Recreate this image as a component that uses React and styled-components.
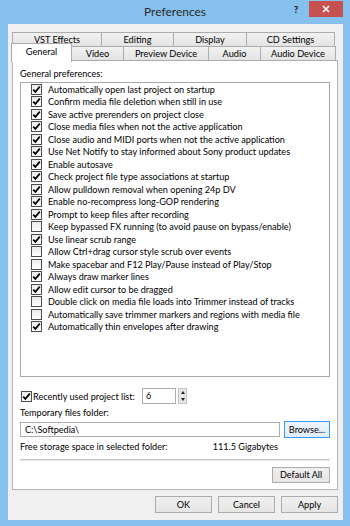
import React from 'react';
import styled, { createGlobalStyle } from 'styled-components';

const GlobalStyle = createGlobalStyle`
  html, body {
    margin: 0;
    padding: 0;
    width: 350px;
    height: 526px;
    overflow: hidden;
  }
  body {
    font-family: Lato, "Liberation Sans", Arial, sans-serif;
    font-size: 9.1px;
    color: #000;
  }
`;

const Window = styled.div`
  width: 350px;
  height: 526px;
  background: #86c0ec;
  display: flex;
  flex-direction: column;
  box-sizing: border-box;
`;

const TitleBar = styled.div`
  height: 24px;
  flex: 0 0 24px;
  display: grid;
  grid-template-columns: 1fr auto 1fr;
  align-items: start;
`;

const Title = styled.div`
  grid-column: 2;
  font-size: 12px;
  line-height: 24px;
  color: #2a2a2a;
`;

const Controls = styled.div`
  grid-column: 3;
  justify-self: end;
  display: flex;
  align-items: flex-start;
  margin-right: 7px;
`;

const HelpButton = styled.div`
  width: 14px;
  height: 16px;
  margin-top: 1px;
  margin-right: 6px;
  font-size: 10px;
  font-weight: 700;
  line-height: 16px;
  text-align: center;
  color: #111;
`;

const CloseButton = styled.div`
  width: 34px;
  height: 16px;
  margin-top: 1px;
  background: #c75050;
  display: flex;
  align-items: center;
  justify-content: center;
`;

const Client = styled.div`
  flex: 1;
  margin: 0 7px 6px 8px;
  padding: 8px 5px 6px 4px;
  background: #f0f0f0;
  display: flex;
  flex-direction: column;
`;

const TabRow = styled.div`
  display: flex;
  align-items: flex-start;
  height: 15px;
  & + & {
    margin-top: -1px;
  }
`;

const Tab = styled.div`
  position: relative;
  box-sizing: border-box;
  width: ${p => p.$w}px;
  height: ${p => (p.$active ? 19 : 15)}px;
  margin-left: ${p => (p.$first ? (p.$active ? -1 : 0) : -1)}px;
  margin-top: ${p => (p.$active ? -3 : 0)}px;
  border: 1px solid #acacac;
  border-bottom: ${p => (p.$active ? 'none' : '1px solid #acacac')};
  background: ${p => (p.$active ? '#fff' : 'linear-gradient(#f2f2f2, #e3e3e3)')};
  z-index: ${p => (p.$active ? 2 : 1)};
  text-align: center;
  font-size: 9.2px;
  line-height: ${p => (p.$active ? 16 : 13)}px;
  white-space: nowrap;
`;

const Panel = styled.div`
  margin-top: -1px;
  border: 1px solid #b4b4b4;
  background: #fff;
  padding: 7px 7px 6px 7px;
  display: flex;
  flex-direction: column;
`;

const Label = styled.div`
  height: 12px;
  line-height: 12px;
  white-space: nowrap;
  margin-top: ${p => p.$gap || 0}px;
`;

const ListBox = styled.div`
  box-sizing: border-box;
  height: 295px;
  margin-top: 2px;
  border: 1px solid #a9a9a9;
  padding: 0 0 0 10px;
`;

const OptionRow = styled.div`
  height: 12.5px;
  display: flex;
  align-items: center;
  gap: 6px;
  white-space: nowrap;
`;

const Box = styled.span`
  box-sizing: border-box;
  flex: 0 0 11px;
  width: 11px;
  height: 11px;
  border: 1px solid #4d4d4d;
  background: linear-gradient(#eaeaea, #ffffff);
  display: flex;
  align-items: center;
  justify-content: center;
  margin-left: ${p => p.$indent || 0}px;
`;

const CheckBox = ({ checked, indent }) => (
  <Box $indent={indent}>
    {checked && (
      <svg width="9" height="9" viewBox="0 0 9 9">
        <path d="M1.2 4.6 L3.4 6.9 L7.8 1.6" fill="none" stroke="#000" strokeWidth="1.7" />
      </svg>
    )}
  </Box>
);

const RecentRow = styled.div`
  display: flex;
  align-items: center;
  height: 16px;
  margin-top: 11px;
  white-space: nowrap;
`;

const RecentLabel = styled.span`
  width: 109px;
  margin-left: 1px;
`;

const SpinField = styled.div`
  box-sizing: border-box;
  width: 34px;
  height: 16px;
  border: 1px solid #abadb3;
  padding-left: 3px;
  line-height: 14px;
`;

const Spinner = styled.div`
  box-sizing: border-box;
  width: 9px;
  height: 16px;
  margin-left: 2px;
  border: 1px solid #c4c4c4;
  background: #e6e6e6;
  display: flex;
  flex-direction: column;
  align-items: center;
  justify-content: space-around;
`;

const Arrow = styled.span`
  width: 0;
  height: 0;
  border-left: 2px solid transparent;
  border-right: 2px solid transparent;
  ${p => (p.$down ? 'border-top: 3px solid #222;' : 'border-bottom: 3px solid #222;')}
`;

const FolderRow = styled.div`
  display: grid;
  grid-template-columns: 1fr 46px;
  gap: 4px;
  align-items: center;
  margin-top: 2px;
  height: 17px;
`;

const TextField = styled.div`
  box-sizing: border-box;
  height: 15px;
  border: 1px solid #abadb3;
  padding-left: 4px;
  line-height: 13px;
`;

const Button = styled.div`
  box-sizing: border-box;
  width: ${p => p.$w || 57}px;
  height: ${p => p.$h || 17}px;
  border: 1px solid ${p => (p.$focus ? '#3399ff' : '#acacac')};
  background: ${p => (p.$focus ? 'linear-gradient(#eef5fc, #e1eefb)' : 'linear-gradient(#f0f0f0, #e5e5e5)')};
  text-align: center;
  line-height: ${p => (p.$h || 17) - 2}px;
  white-space: nowrap;
`;

const StorageRow = styled.div`
  display: flex;
  justify-content: space-between;
  height: 12px;
  line-height: 12px;
  margin-top: 3px;
  padding-right: 52px;
  white-space: nowrap;
`;

const Separator = styled.div`
  margin-top: 6px;
  height: 0;
  border-top: 1px solid #c8c8c8;
  border-bottom: 1px solid #e8e8e8;
`;

const PanelActions = styled.div`
  display: flex;
  justify-content: flex-end;
  margin-top: 6px;
`;

const Footer = styled.div`
  display: flex;
  justify-content: flex-end;
  gap: 6px;
  margin-top: 6px;
`;

const topTabs = [
  ['VST Effects', 90],
  ['Editing', 73],
  ['Display', 74],
  ['CD Settings', 89],
];

const bottomTabs = [
  ['General', 61, true],
  ['Video', 53],
  ['Preview Device', 86],
  ['Audio', 53],
  ['Audio Device', 76],
];

const options = [
  ['Automatically open last project on startup', true],
  ['Confirm media file deletion when still in use', true],
  ['Save active prerenders on project close', true],
  ['Close media files when not the active application', true],
  ['Close audio and MIDI ports when not the active application', true],
  ['Use Net Notify to stay informed about Sony product updates', true],
  ['Enable autosave', true],
  ['Check project file type associations at startup', true],
  ['Allow pulldown removal when opening 24p DV', true],
  ['Enable no-recompress long-GOP rendering', true],
  ['Prompt to keep files after recording', true],
  ['Keep bypassed FX running (to avoid pause on bypass/enable)', false],
  ['Use linear scrub range', true],
  ['Allow Ctrl+drag cursor style scrub over events', false],
  ['Make spacebar and F12 Play/Pause instead of Play/Stop', false],
  ['Always draw marker lines', true],
  ['Allow edit cursor to be dragged', true],
  ['Double click on media file loads into Trimmer instead of tracks', false],
  ['Automatically save trimmer markers and regions with media file', false],
  ['Automatically thin envelopes after drawing', true],
];

const App = () => (
  <Window>
    <GlobalStyle />
    <TitleBar>
      <Title>Preferences</Title>
      <Controls>
        <HelpButton>?</HelpButton>
        <CloseButton>
          <svg width="8" height="8" viewBox="0 0 8 8">
            <path d="M1 1 L7 7 M7 1 L1 7" stroke="#fff" strokeWidth="1.6" />
          </svg>
        </CloseButton>
      </Controls>
    </TitleBar>
    <Client>
      <TabRow>
        {topTabs.map(([name, w], i) => (
          <Tab key={name} $w={w} $first={i === 0}>{name}</Tab>
        ))}
      </TabRow>
      <TabRow>
        {bottomTabs.map(([name, w, active], i) => (
          <Tab key={name} $w={w} $first={i === 0} $active={active}>{name}</Tab>
        ))}
      </TabRow>
      <Panel>
        <Label>General preferences:</Label>
        <ListBox>
          {options.map(([text, checked]) => (
            <OptionRow key={text}>
              <CheckBox checked={checked} />
              <span>{text}</span>
            </OptionRow>
          ))}
        </ListBox>
        <RecentRow>
          <CheckBox checked indent={1} />
          <RecentLabel>Recently used project list:</RecentLabel>
          <SpinField>6</SpinField>
          <Spinner>
            <Arrow />
            <Arrow $down />
          </Spinner>
        </RecentRow>
        <Label $gap={3}>Temporary files folder:</Label>
        <FolderRow>
          <TextField>C:\Softpedia\</TextField>
          <Button $w={46} $focus>Browse...</Button>
        </FolderRow>
        <StorageRow>
          <span>Free storage space in selected folder:</span>
          <span>111.5 Gigabytes</span>
        </StorageRow>
        <Separator />
        <PanelActions>
          <Button $w={58} $h={16}>Default All</Button>
        </PanelActions>
      </Panel>
      <Footer>
        <Button>OK</Button>
        <Button>Cancel</Button>
        <Button>Apply</Button>
      </Footer>
    </Client>
  </Window>
);

export default App;
